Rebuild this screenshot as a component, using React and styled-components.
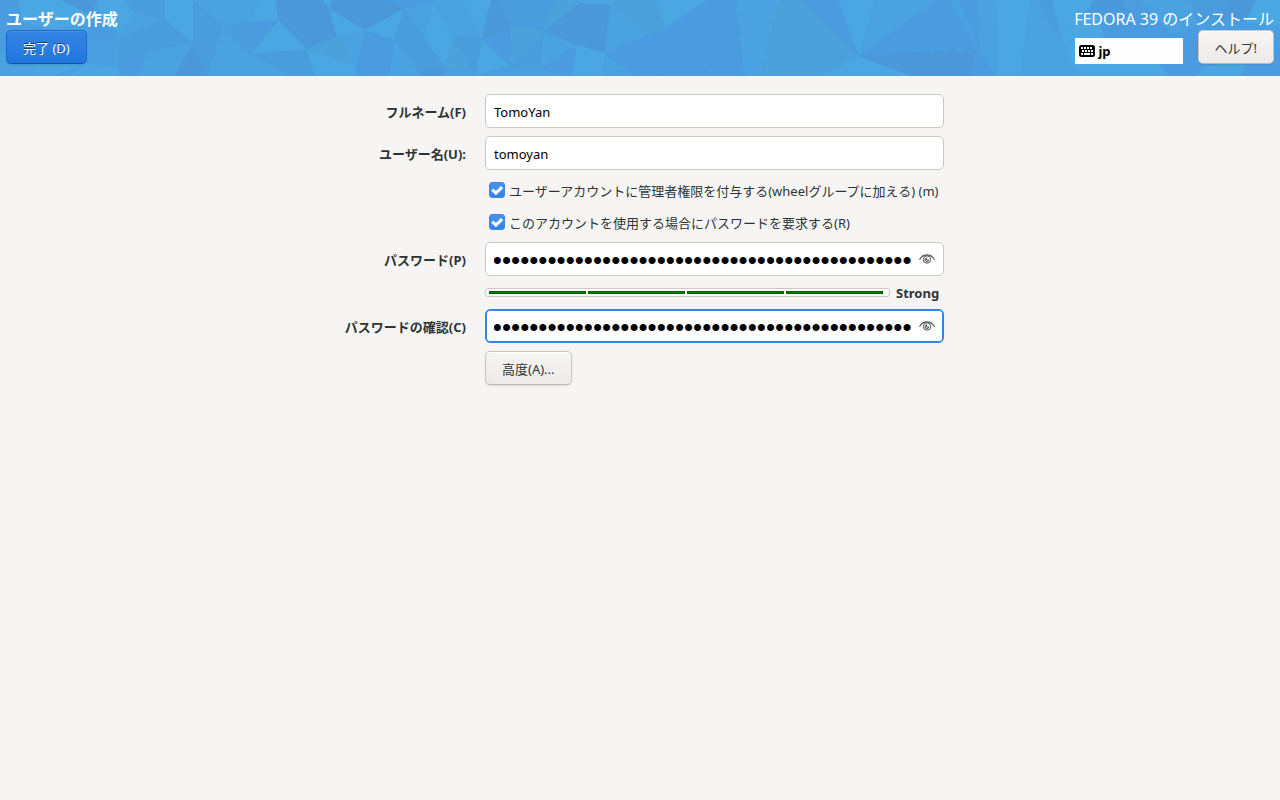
import React, { useLayoutEffect, useRef, useState } from "react";
import styled, { createGlobalStyle, css } from "styled-components";

const SHADES = {
  light: "#4aa7e2",
  sky: "#4aa2e1",
  teal: "#4ba2db",
  mid: "#4a9ddd",
  blue: "#4a9be0",
  dark: "#4a98da",
};

const FACETS = [
  ["teal", "0,0 40,0 22,30 0,24"],
  ["blue", "0,0 18,0 30,42 10,76 0,76"],
  ["light", "18,0 62,0 92,16 60,30 22,22"],
  ["dark", "62,0 96,0 92,16"],
  ["sky", "0,50 30,62 46,76 0,76"],
  ["light", "30,62 86,64 52,76 36,76"],
  ["light", "96,0 125,0 135,13 120,34 104,22"],
  ["blue", "92,16 104,22 120,38 88,40"],
  ["mid", "125,0 165,0 165,20 135,13"],
  ["sky", "135,13 165,20 120,38"],
  ["mid", "120,38 165,20 147,52 118,68"],
  ["light", "86,64 118,68 120,76 70,76"],
  ["blue", "118,68 147,52 140,76 120,76"],
  ["light", "165,0 193,0 193,43 165,20"],
  ["mid", "165,20 193,43 147,52"],
  ["sky", "147,52 193,43 176,73 140,76"],
  ["sky", "193,0 258,0 251,22 222,26"],
  ["mid", "193,0 222,26 193,43"],
  ["dark", "193,43 207,76 176,76 176,73"],
  ["sky", "222,26 251,54 207,76"],
  ["mid", "193,43 222,26 207,76"],
  ["mid", "222,26 251,22 251,54"],
  ["light", "258,0 275,0 279,20 251,22"],
  ["blue", "251,22 279,20 251,54"],
  ["light", "279,20 307,49 251,54"],
  ["mid", "251,54 307,49 315,76 207,76"],
  ["sky", "251,54 290,76 207,76"],
  ["dark", "275,0 322,0 329,9 279,20"],
  ["dark", "279,20 329,9 337,37 307,49"],
  ["teal", "307,49 337,37 357,66 320,54"],
  ["light", "307,49 357,66 354,76 315,76"],
  ["light", "322,0 332,0 329,9"],
  ["dark", "332,0 384,0 404,9 365,30 329,9"],
  ["light", "329,9 365,30 337,37"],
  ["sky", "337,37 365,30 357,66"],
  ["blue", "365,30 394,40 390,76 354,76 357,66"],
  ["light", "365,30 404,9 394,40"],
  ["blue", "384,0 434,0 434,2 404,9"],
  ["mid", "404,9 424,38 394,40"],
  ["sky", "404,9 434,2 424,38"],
  ["sky", "394,40 417,69 420,76 390,76"],
  ["mid", "394,40 424,38 446,68 417,69"],
  ["light", "434,2 453,37 446,68 424,38"],
  ["sky", "434,0 463,0 482,39 453,37"],
  ["teal", "453,37 476,75 446,68"],
  ["dark", "417,69 446,68 442,76 420,76"],
  ["mid", "453,37 482,39 476,75"],
  ["light", "463,0 491,0 482,39"],
  ["dark", "491,0 498,0 511,28 482,39"],
  ["blue", "482,39 511,28 510,66"],
  ["light", "482,39 510,66 476,75"],
  ["mid", "498,0 556,0 544,31 511,28"],
  ["teal", "511,28 544,31 510,66"],
  ["mid", "544,31 540,69 510,66"],
  ["sky", "544,31 577,45 540,69"],
  ["teal", "556,0 586,0 580,3 544,31"],
  ["dark", "544,31 580,3 577,45"],
  ["dark", "580,3 610,5 605,53 577,45"],
  ["light", "586,0 616,0 610,5 580,3"],
  ["blue", "577,45 572,76 540,69"],
  ["light", "577,45 605,53 603,76 572,76"],
  ["sky", "605,53 635,76 603,76"],
  ["teal", "616,0 656,0 666,28 640,38 610,5"],
  ["sky", "610,5 650,34 605,53"],
  ["blue", "605,53 666,28 663,76 635,76"],
  ["light", "656,0 707,0 666,28"],
  ["blue", "707,0 736,0 745,76 716,76 666,28"],
  ["blue", "666,28 716,76 663,76"],
  ["sky", "736,0 778,0 760,76 745,76"],
  ["teal", "778,0 802,0 859,56 820,76 760,76"],
  ["blue", "802,0 838,0 859,56"],
  ["light", "838,0 875,0 859,56"],
  ["sky", "875,0 938,0 859,56"],
  ["blue", "938,0 948,0 978,48 859,56"],
  ["sky", "948,0 960,0 980,50"],
  ["dark", "859,56 978,48 970,76 910,76"],
  ["light", "859,56 910,76 820,76"],
  ["blue", "960,0 978,0 980,50"],
  ["sky", "978,0 1040,0 1040,76 996,76 980,50"],
  ["light", "996,0 1030,0 1020,76 998,76"],
  ["blue", "980,50 996,76 970,76"],
  ["mid", "1040,0 1052,0 1060,38 1040,8"],
  ["light", "1052,0 1094,0 1062,40"],
  ["sky", "1040,8 1062,40 1078,76 1040,76"],
  ["dark", "1094,0 1122,0 1126,10 1086,14"],
  ["light", "1086,14 1098,12 1108,52 1094,76 1078,76 1062,40"],
  ["blue", "1098,12 1126,10 1140,44 1108,52"],
  ["light", "1108,52 1140,44 1170,76 1094,76"],
  ["blue", "1126,10 1140,0 1176,40 1140,44"],
  ["sky", "1140,0 1190,0 1198,26 1176,40"],
  ["blue", "1140,44 1198,26 1206,66 1196,76 1170,76"],
  ["mid", "1190,0 1230,0 1216,20 1198,26"],
  ["dark", "1230,0 1256,0 1246,22 1216,20"],
  ["light", "1256,0 1280,0 1280,26 1246,22"],
  ["light", "1206,66 1250,60 1240,76 1198,76"],
  ["blue", "1250,60 1280,50 1280,76 1240,76"],
];

const JAGGED_EDGES = "M694 55 L716 76 M737 8 L745 76 M778 0 L760 76 M930 52 L978 48";

const GlobalStyle = createGlobalStyle`
  * {
    box-sizing: border-box;
  }
  body {
    margin: 0;
    background: #f6f5f4;
    color: #2e3436;
  }
  body, button, input {
    font-family: "Noto Sans", "Noto Sans CJK JP", sans-serif;
    font-size: 13px;
    line-height: 20px;
  }
`;

const Header = styled.header`
  position: relative;
  display: flex;
  justify-content: space-between;
  min-height: 76px;
  padding: 8px 6px 12px;
  background: #4a9fe0;
  color: #fff;
`;

const HeaderArt = styled.svg`
  position: absolute;
  inset: 0;
  width: 100%;
  height: 100%;
`;

const HeaderSide = styled.div`
  position: relative;
  display: flex;
  flex-direction: column;
  align-items: ${({ $end }) => ($end ? "flex-end" : "flex-start")};
`;

const Title = styled.h1`
  margin: 0;
  font-size: 16px;
  line-height: 22px;
  font-weight: ${({ $bold }) => ($bold ? 700 : 400)};
  white-space: nowrap;
`;

const HeaderTools = styled.div`
  display: flex;
  align-items: flex-end;
  gap: 15px;
`;

const Button = styled.button`
  height: 34px;
  padding: 2px 16px 0;
  border: 1px solid #cdc7c2;
  border-bottom-color: #bfb8b1;
  border-radius: 5px;
  background: linear-gradient(#f6f5f4, #edebe9);
  box-shadow: inset 0 1px #fff, 0 1px 2px rgba(0, 0, 0, 0.1);
  color: #2e3436;
  white-space: nowrap;
  ${({ $primary }) =>
    $primary &&
    css`
      border-color: #1b6acb;
      border-bottom-color: #15539e;
      background: linear-gradient(#3584e4, #1f76e1);
      box-shadow: inset 0 1px rgba(255, 255, 255, 0.1), 0 1px 2px rgba(0, 0, 0, 0.1);
      color: #fff;
      text-shadow: 0 -1px rgba(0, 0, 0, 0.5);
    `}
`;

const LayoutButton = styled.button`
  display: flex;
  align-items: center;
  gap: 4px;
  width: 108px;
  height: 26px;
  padding: 0 4px;
  border: 0;
  background: #fdfdfd;
  color: #000;
  font-weight: 700;
`;

const Form = styled.form`
  display: grid;
  grid-template-columns: minmax(0, 130px) minmax(0, 459px);
  column-gap: 19px;
  row-gap: 8px;
  justify-content: center;
  align-items: center;
  padding: 18px 12px;
`;

const Label = styled.label`
  grid-column: 1;
  padding-top: 1px;
  text-align: right;
  font-weight: 700;
`;

const Field = styled.div`
  grid-column: 2;
  display: flex;
  align-items: center;
  gap: 7px;
  height: 34px;
  padding: 0 8px;
  border: 1px solid #cdc7c2;
  border-radius: 5px;
  background: #fff;
  ${({ $active }) =>
    $active &&
    css`
      border-color: #3584e4;
      box-shadow: inset 0 0 0 1px #3584e4;
    `}
`;

const Input = styled.input`
  flex: 1;
  min-width: 0;
  height: 28px;
  padding: 2px 0 0;
  border: 0;
  outline: 0;
  background: transparent;
  color: #000;
`;

const SecretInput = styled(Input)`
  font-family: "Liberation Sans", sans-serif;
  font-size: 26px;
`;

const EyeButton = styled.button`
  display: flex;
  padding: 0;
  border: 0;
  background: none;
  color: #4c5153;
`;

const CheckRow = styled.label`
  grid-column: 2;
  display: flex;
  align-items: center;
  gap: 4px;
  height: 24px;
  padding-left: 4px;
  white-space: nowrap;
`;

const CheckText = styled.span`
  padding-top: 2px;
`;

const CheckBox = styled.span`
  display: grid;
  > * {
    grid-area: 1 / 1;
  }
  svg {
    pointer-events: none;
    visibility: hidden;
  }
  input:checked + svg {
    visibility: visible;
  }
`;

const CheckInput = styled.input`
  appearance: none;
  width: 16px;
  height: 16px;
  margin: 0;
  border: 1px solid #cdc7c2;
  border-radius: 3px;
  background: #fff;
  &:checked {
    border-color: #3a86e2;
    background: linear-gradient(#4b92e8, #3584e4);
  }
`;

const Strength = styled.div`
  grid-column: 2;
  display: flex;
  align-items: center;
  gap: 6px;
  height: 17px;
`;

const StrengthBar = styled.div`
  flex: 1;
  display: flex;
  gap: 2px;
  height: 9px;
  padding: 2px 6px 2px 3px;
  border: 1px solid #cdc7c2;
  border-radius: 3px;
  background: #fff;
`;

const StrengthBlock = styled.span`
  flex: 1;
  height: 3px;
  border: 1px solid #006100;
  background: #008000;
`;

const StrengthText = styled.span`
  width: 48px;
  font-weight: 700;
`;

const FormAction = styled.div`
  grid-column: 2;
`;

const KeyboardIcon = () => (
  <svg width="16" height="12" viewBox="0 0 16 12" aria-hidden="true">
    <rect width="16" height="12" rx="2.5" fill="#000" />
    <path
      fill="#fff"
      d="M2 2h2v2H2zM5 2h2v2H5zM8 2h2v2H8zM11 2h2v2h-2zM3 5h2v2H3zM6 5h2v2H6zM9 5h2v2H9zM12 5h2v2h-2zM2 8h2v2H2zM5 8h6v2H5zM12 8h2v2h-2z"
    />
  </svg>
);

const EyeIcon = () => (
  <svg width="16" height="16" viewBox="0 0 16 16" fill="none" stroke="currentColor" aria-hidden="true">
    <path strokeWidth="1.2" d="M.5 8.800C2.200 5.300 4.900 3.900 8 3.900s5.800 1.400 7.500 4.900" />
    <circle cx="8" cy="8.500" r="3.700" strokeWidth="1" />
    <path strokeWidth="1" d="M7.500 6.800a1.900 1.900 0 1 0 2.300 2.200H7.500z" />
  </svg>
);

const CheckIcon = () => (
  <svg width="16" height="16" viewBox="0 0 16 16" fill="none" aria-hidden="true">
    <path stroke="#fff" strokeWidth="3" d="M3.300 7.600l3.600 3.500 6.200-6" />
  </svg>
);

const TextField = ({ id, label, initial }) => {
  const [value, setValue] = useState(initial);
  return (
    <>
      <Label htmlFor={id}>{label}</Label>
      <Field>
        <Input id={id} type="text" value={value} onChange={(e) => setValue(e.target.value)} />
      </Field>
    </>
  );
};

const PasswordField = ({ id, label, active }) => {
  const [value, setValue] = useState("x".repeat(64));
  const [shown, setShown] = useState(false);
  const inputRef = useRef(null);

  // keep the end of a long password in view
  useLayoutEffect(() => {
    inputRef.current.scrollLeft = inputRef.current.scrollWidth;
  }, []);

  return (
    <>
      <Label htmlFor={id}>{label}</Label>
      <Field $active={active}>
        <SecretInput
          id={id}
          ref={inputRef}
          type={shown ? "text" : "password"}
          value={value}
          onChange={(e) => setValue(e.target.value)}
        />
        <EyeButton type="button" aria-label="パスワードを表示" onClick={() => setShown(!shown)}>
          <EyeIcon />
        </EyeButton>
      </Field>
    </>
  );
};

const CheckField = ({ children }) => (
  <CheckRow>
    <CheckBox>
      <CheckInput type="checkbox" defaultChecked />
      <CheckIcon />
    </CheckBox>
    <CheckText>{children}</CheckText>
  </CheckRow>
);

const App = () => {
  return (
    <div lang="ja">
      <GlobalStyle />
      <Header>
        <HeaderArt viewBox="0 0 1280 76" preserveAspectRatio="xMidYMin slice" aria-hidden="true">
          {FACETS.map(([shade, points]) => (
            <polygon key={points} points={points} fill={SHADES[shade]} />
          ))}
          <path d={JAGGED_EDGES} stroke="#4fb0e4" strokeWidth="0.6" strokeDasharray="5 9" />
        </HeaderArt>
        <HeaderSide>
          <Title $bold>ユーザーの作成</Title>
          <Button type="button" $primary>
            完了 (D)
          </Button>
        </HeaderSide>
        <HeaderSide $end>
          <Title as="div">FEDORA 39 のインストール</Title>
          <HeaderTools>
            <LayoutButton type="button">
              <KeyboardIcon />
              jp
            </LayoutButton>
            <Button type="button">ヘルプ!</Button>
          </HeaderTools>
        </HeaderSide>
      </Header>
      <Form onSubmit={(e) => e.preventDefault()}>
        <TextField id="fullname" label="フルネーム(F)" initial="TomoYan" />
        <TextField id="username" label="ユーザー名(U):" initial="tomoyan" />
        <CheckField>ユーザーアカウントに管理者権限を付与する(wheelグループに加える) (m)</CheckField>
        <CheckField>このアカウントを使用する場合にパスワードを要求する(R)</CheckField>
        <PasswordField id="password" label="パスワード(P)" />
        <Strength>
          <StrengthBar>
            <StrengthBlock />
            <StrengthBlock />
            <StrengthBlock />
            <StrengthBlock />
          </StrengthBar>
          <StrengthText>Strong</StrengthText>
        </Strength>
        <PasswordField id="confirm" label="パスワードの確認(C)" active />
        <FormAction>
          <Button type="button">高度(A)...</Button>
        </FormAction>
      </Form>
    </div>
  );
};

export default App;
